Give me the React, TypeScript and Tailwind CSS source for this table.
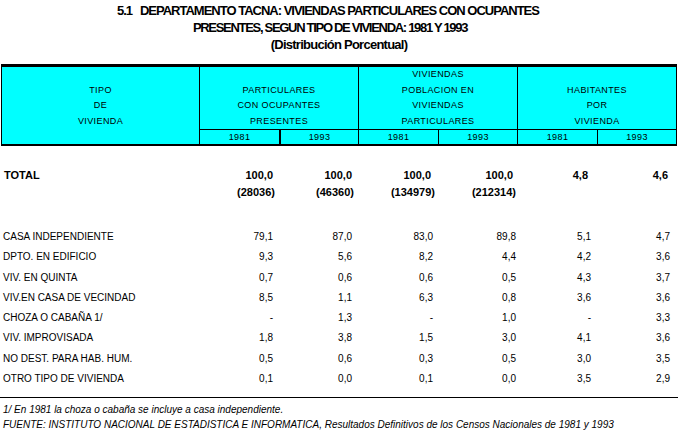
import React from 'react';

const rows: string[][] = [
  ['CASA INDEPENDIENTE', '79,1', '87,0', '83,0', '89,8', '5,1', '4,7'],
  ['DPTO. EN EDIFICIO', '9,3', '5,6', '8,2', '4,4', '4,2', '3,6'],
  ['VIV. EN QUINTA', '0,7', '0,6', '0,6', '0,5', '4,3', '3,7'],
  ['VIV.EN CASA DE VECINDAD', '8,5', '1,1', '6,3', '0,8', '3,6', '3,6'],
  ['CHOZA O CABAÑA 1/', '-', '1,3', '-', '1,0', '-', '3,3'],
  ['VIV. IMPROVISADA', '1,8', '3,8', '1,5', '3,0', '4,1', '3,6'],
  ['NO DEST. PARA HAB. HUM.', '0,5', '0,6', '0,3', '0,5', '3,0', '3,5'],
  ['OTRO TIPO DE VIVIENDA', '0,1', '0,0', '0,1', '0,0', '3,5', '2,9'],
];

// right padding per numeric column
const pads = ['pr-[6px]', 'pr-[6px]', 'pr-[5px]', 'pr-[1px]', 'pr-[6px]', 'pr-[6px]'];
const boldPads = ['pr-[6px]', 'pr-[6px]', 'pr-[7px]', 'pr-[4px]', 'pr-[9px]', 'pr-[8px]'];
const parenPads = ['pr-[4px]', 'pr-[4px]', 'pr-[3px]', 'pr-[1px]', 'pr-[0px]', 'pr-[0px]'];

const grid = 'grid grid-cols-[199px_80px_79px_80px_79px_80px_79px]';

function Group({ lines, yearSplit }: { lines: string[]; yearSplit: string }) {
  return (
    <div className="flex flex-col border-l border-black">
      <div className="flex h-[63px] flex-col items-center justify-end border-b border-black leading-[15.5px]">
        {lines.map((l, i) => (
          <span key={i}>{l}</span>
        ))}
      </div>
      <div className="flex h-[14px] leading-[14px]">
        <div className="w-[79px] text-center">1981</div>
        <div className={`flex-1 text-center border-black ${yearSplit}`}>1993</div>
      </div>
    </div>
  );
}

export default function App() {
  return (
    <div className="w-[678px] h-[432px] bg-white text-black overflow-hidden font-['Liberation_Sans',Arial,sans-serif]">
      {/* Title */}
      <div className="pt-[1.5px] flex flex-col items-center text-[13px] font-bold leading-[17px]">
        <div className="pr-[22px] tracking-[-1px]">5.1&nbsp;&nbsp;&nbsp;DEPARTAMENTO TACNA: VIVIENDAS PARTICULARES CON OCUPANTES</div>
        <div className="pr-[18px] tracking-[-1.3px]">PRESENTES, SEGUN TIPO DE VIVIENDA: 1981 Y 1993</div>
        <div className="tracking-[-0.75px]">(Distribución Porcentual)</div>
      </div>

      {/* Header */}
      <div className="mt-[11.5px] ml-[1px] w-[676px] border-t-[3px] border-b-2 border-x border-black bg-[#00ffff] text-[9px] tracking-[0.4px] flex">
        <div className="w-[197px] flex flex-col items-center justify-end pb-[15px] leading-[15.5px]">
          <span>TIPO</span>
          <span>DE</span>
          <span>VIVIENDA</span>
        </div>
        <div className="w-[159px]">
          <Group lines={['PARTICULARES', 'CON OCUPANTES', 'PRESENTES']} yearSplit="border-l-2" />
        </div>
        <div className="w-[159px]">
          <Group lines={['VIVIENDAS', 'POBLACION EN', 'VIVIENDAS', 'PARTICULARES']} yearSplit="border-l" />
        </div>
        <div className="w-[159px]">
          <Group lines={['HABITANTES', 'POR', 'VIVIENDA']} yearSplit="border-l" />
        </div>
      </div>

      {/* Totals */}
      <div className="mt-[21px] text-[11px] font-bold">
        <div className={`${grid} h-[17px] leading-[17px]`}>
          <div className="pl-[4px]">TOTAL</div>
          {['100,0', '100,0', '100,0', '100,0', '4,8', '4,6'].map((v, i) => (
            <div key={i} className={`text-right ${boldPads[i]}`}>{v}</div>
          ))}
        </div>
        <div className={`${grid} h-[17px] leading-[17px]`}>
          <div />
          {['(28036)', '(46360)', '(134979)', '(212314)', '', ''].map((v, i) => (
            <div key={i} className={`text-right ${parenPads[i]}`}>{v}</div>
          ))}
        </div>
      </div>

      {/* Rows */}
      <div className="mt-[26px] text-[10px]">
        {rows.map((r, ri) => (
          <div key={ri} className={`${grid} h-[20.3px] leading-[20.3px]`}>
            <div className="pl-[3px]">{r[0]}</div>
            {r.slice(1).map((v, i) => (
              <div key={i} className={`text-right ${pads[i]}`}>{v}</div>
            ))}
          </div>
        ))}
      </div>

      {/* Footer */}
      <div className="mt-[8px] border-t border-black pt-[4px] pl-[3px] text-[10px] italic leading-[15px]">
        <div>1/ En 1981 la choza o cabaña se incluye a casa independiente.</div>
        <div>FUENTE: INSTITUTO NACIONAL DE ESTADISTICA E INFORMATICA, Resultados Definitivos de los Censos Nacionales de 1981 y 1993</div>
      </div>
    </div>
  );
}
